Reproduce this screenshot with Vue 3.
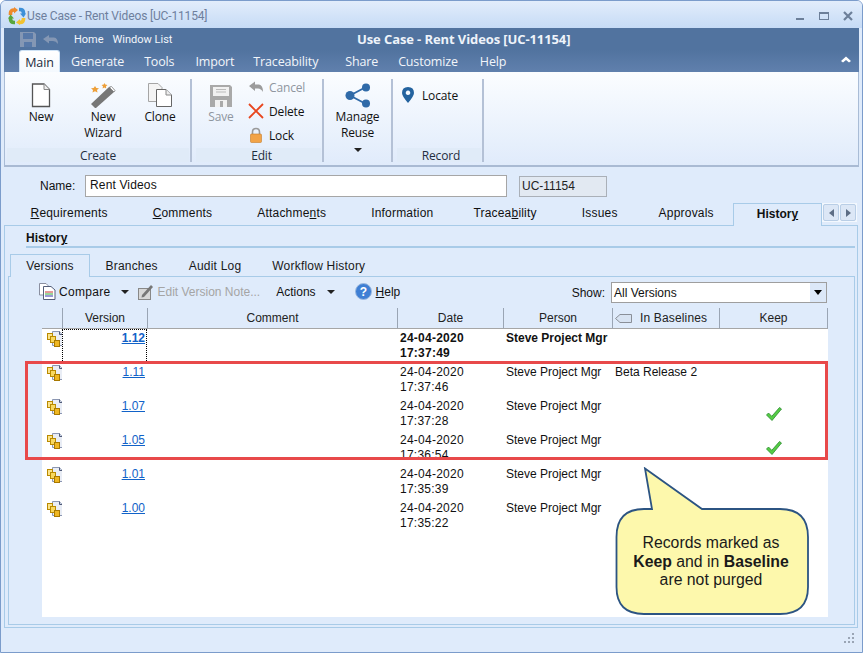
<script setup>
const tabs = [
  { pre: '', u: 'R', post: 'equirements' },
  { pre: '', u: 'C', post: 'omments' },
  { pre: 'Attachme', u: 'n', post: 'ts' },
  { pre: 'Information', u: '', post: '' },
  { pre: 'Tracea', u: 'b', post: 'ility' },
  { pre: 'Issues', u: '', post: '' },
  { pre: 'Approvals', u: '', post: '' },
]
const subTabs = ['Branches', 'Audit Log', 'Workflow History']
const columns = ['Version', 'Comment', 'Date', 'Person', 'In Baselines', 'Keep']
const rows = [
  { v: '1.12', t: '17:37:49', base: '', keep: false, bold: true },
  { v: '1.11', t: '17:37:46', base: 'Beta Release 2', keep: false },
  { v: '1.07', t: '17:37:28', base: '', keep: true },
  { v: '1.05', t: '17:36:54', base: '', keep: true },
  { v: '1.01', t: '17:35:39', base: '', keep: false },
  { v: '1.00', t: '17:35:22', base: '', keep: false },
]
</script>

<template>
  <div class="window">
    <header class="titlebar">
      <svg class="logo" width="18" height="18" viewBox="0 0 18 18" fill="none" stroke-width="3.6">
        <path d="M2.500 8 V6 Q2.500 3 6 3 H7" stroke="#ee8a2c" />
        <path d="M6 0 L10 3 L6 6.500 Z" fill="#ee8a2c" stroke="none" />
        <path d="M11 2.500 H12 Q15.500 2.500 15.500 6 V7" stroke="#3d90d8" />
        <path d="M12 6.500 L15.500 10.500 L18 6.500 Z" fill="#3d90d8" stroke="none" />
        <path d="M15.500 11 V12 Q15.500 15.500 12 15.500 H11" stroke="#f2c230" />
        <path d="M12 12 L8 15.500 L12 18 Z" fill="#f2c230" stroke="none" />
        <path d="M7 15.500 H6 Q2.500 15.500 2.500 12 V11" stroke="#5aa63c" />
        <path d="M0 11.500 L2.500 7.500 L6 11.500 Z" fill="#5aa63c" stroke="none" />
      </svg>
      <span class="win-title">Use Case - Rent Videos [UC-11154]</span>
      <div class="win-btns">
        <svg width="12" height="12" viewBox="0 0 12 12"><rect x="2" y="8" width="8" height="2" fill="#6c7f99" /></svg>
        <svg width="12" height="12" viewBox="0 0 12 12"><rect x="1.500" y="2.500" width="9" height="7" fill="none" stroke="#6c7f99" /><rect x="1" y="2" width="10" height="2" fill="#6c7f99" /></svg>
        <svg width="12" height="12" viewBox="0 0 12 12"><path d="M2 2 L10 10 M10 2 L2 10" stroke="#6c7f99" stroke-width="2.200" /></svg>
      </div>
    </header>

    <section class="ribbon-head">
      <div class="qat">
        <svg class="qat-save" width="16" height="16" viewBox="0 0 16 16">
          <path d="M0 1 H14 L16 3 V16 H0 Z" fill="#8497b4" />
          <rect x="3" y="2" width="10" height="6" fill="#5879a8" />
          <rect x="4" y="11" width="8" height="5" fill="#5879a8" />
        </svg>
        <svg class="qat-undo" width="15" height="10" viewBox="0 0 15 10">
          <path d="M0 4 L6 0 V2.500 H11 Q15 3 15 9 Q13 6 10 6 H6 V8.500 Z" fill="#8497b4" />
        </svg>
        <span class="qat-link first">Home</span>
        <span class="qat-link">Window List</span>
        <span class="band-title">Use Case - Rent Videos [UC-11154]</span>
      </div>
      <nav class="rib-tabs">
        <span class="rib-tab active">Main</span>
        <span class="rib-tab t-gen">Generate</span>
        <span class="rib-tab t-too">Tools</span>
        <span class="rib-tab t-imp">Import</span>
        <span class="rib-tab t-tra">Traceability</span>
        <span class="rib-tab t-sha">Share</span>
        <span class="rib-tab t-cus">Customize</span>
        <span class="rib-tab t-hel">Help</span>
        <svg class="collapse" width="10" height="7" viewBox="0 0 10 7"><path d="M0 5 L5 0.500 L10 5 L8 6.500 L5 4 L2 6.500 Z" fill="#fff" /></svg>
      </nav>
    </section>

    <section class="ribbon">
      <div class="group g-create">
        <div class="group-body">
          <div class="big w-new">
            <svg width="20" height="25" viewBox="0 0 20 25"><path d="M1.500 1 H13 L18.500 6.500 V23.500 H1.500 Z" fill="#fff" stroke="#555" stroke-width="1.300" /><path d="M13 1 V6.500 H18.500" fill="#eee" stroke="#888" /></svg>
            <span>New</span>
          </div>
          <div class="big w-wiz">
            <svg width="26" height="25" viewBox="0 0 26 25">
              <path d="M1 21 L19 4 Q20 3 21.500 4 L24.500 7 Q25 8 24 9 L6 25 H5 Z" fill="#777" />
              <path d="M19.500 4.500 L24 9 L25 7.500 L21.500 3.500 Z" fill="#fff" stroke="#777" stroke-width=".7" />
              <path d="M5 3 L6.300 5 L9 5.200 L7 7 L7.500 9.500 L5 8.300 L2.500 9.500 L3 7 L1 5.200 L3.700 5 Z" fill="#eea03a" />
              <path d="M14.500 0 L15.300 1.500 L17.500 2 L16 3.300 L16.200 5.500 L14.500 4.500 L12.500 5.500 L13 3.300 L11.500 2 L13.700 1.500 Z" fill="#eea03a" />
            </svg>
            <span>New<br />Wizard</span>
          </div>
          <div class="big w-clo">
            <svg width="24" height="25" viewBox="0 0 24 25">
              <path d="M.5 .5 H10 L14 4.500 V18.500 H.5 Z" fill="#f4f4f4" stroke="#a5a5a5" />
              <path d="M8.500 6.500 H18 L23.500 12 V23.500 H8.500 Z" fill="#fff" stroke="#666" />
              <path d="M18 6.500 V12 H23.500" fill="#eee" stroke="#888" />
            </svg>
            <span>Clone</span>
          </div>
        </div>
        <div class="group-label">Create</div>
      </div>

      <div class="group g-edit">
        <div class="group-body">
          <div class="big w-save disabled">
            <svg width="22" height="22" viewBox="0 0 22 22">
              <path d="M0 0 H20 L22 2 V22 H0 Z" fill="#a9a9a9" />
              <rect x="3" y="2" width="16" height="9" fill="#f1f1f1" />
              <path d="M6 4.500 H16 M6 7 H16" stroke="#bbb" />
              <rect x="5" y="15" width="12" height="7" fill="#f1f1f1" />
              <rect x="10" y="16" width="3" height="6" fill="#a9a9a9" />
            </svg>
            <span>Save</span>
          </div>
          <div class="small-col">
            <div class="small disabled">
              <svg width="16" height="16" viewBox="0 0 16 16"><path d="M1 7 L7 2.500 V5.500 H11 Q15 6 15 13 Q13 9.500 10 9.500 H7 V12 Z" fill="#9c9c9c" /></svg>
              <span>Cancel</span>
            </div>
            <div class="small">
              <svg width="16" height="16" viewBox="0 0 16 16"><path d="M1 1 L15 15 M15 1 L1 15" stroke="#e8461e" stroke-width="1.800" /></svg>
              <span>Delete</span>
            </div>
            <div class="small">
              <svg width="16" height="16" viewBox="0 0 16 16">
                <path d="M4.500 8 V5 Q4.500 1.500 8 1.500 Q11.500 1.500 11.500 5 V8" fill="none" stroke="#9a9a9a" stroke-width="1.600" />
                <rect x="2.500" y="7" width="11" height="8.500" rx="1" fill="#f2a347" stroke="#c77c28" stroke-width=".6" />
              </svg>
              <span>Lock</span>
            </div>
          </div>
        </div>
        <div class="group-label">Edit</div>
      </div>

      <div class="group g-reuse">
        <div class="big w-reuse">
          <svg width="26" height="25" viewBox="0 0 26 25">
            <path d="M21 4 L5 12.500 L21 21" fill="none" stroke="#2f6aa8" stroke-width="1.800" />
            <circle cx="21" cy="4.500" r="4" fill="#2f6aa8" />
            <circle cx="5" cy="12.500" r="4.500" fill="#2f6aa8" />
            <circle cx="21" cy="20.500" r="4" fill="#2f6aa8" />
          </svg>
          <span>Manage<br />Reuse</span>
          <i class="drop-arrow"></i>
        </div>
      </div>

      <div class="group g-record">
        <div class="group-body">
          <div class="small locate">
            <svg width="12" height="16" viewBox="0 0 12 16"><path fill-rule="evenodd" d="M6 0 Q12 0 12 6 Q12 9 6 16 Q0 9 0 6 Q0 0 6 0 Z M6 3.500 A2.300 2.300 0 1 0 6.010 3.500 Z" fill="#24639f" /></svg>
            <span>Locate</span>
          </div>
        </div>
        <div class="group-label">Record</div>
      </div>
    </section>

    <main class="body">
      <div class="name-row">
        <label class="name-label">Name:</label>
        <div class="name-input">Rent Videos</div>
        <div class="id-box">UC-11154</div>
      </div>

      <div class="tabs-row">
        <span v-for="t in tabs" :key="t.pre + t.u" class="tab">{{ t.pre }}<u v-if="t.u">{{ t.u }}</u>{{ t.post }}</span>
        <span class="tab tab-active">Histor<u>y</u></span>
        <div class="scroll-btns">
          <button class="scroll-btn" aria-label="Previous"><i class="tri-left"></i></button>
          <button class="scroll-btn" aria-label="Next"><i class="tri-right"></i></button>
        </div>
      </div>

      <div class="panel">
        <h2 class="history-title">Histor<u>y</u></h2>
        <div class="sub-tabs">
          <span class="sub-tab sub-active">Versions</span>
          <span v-for="s in subTabs" :key="s" class="sub-tab">{{ s }}</span>
        </div>
        <div class="subpanel">
          <div class="toolbar">
            <svg class="tb-icon" width="17" height="17" viewBox="0 0 17 17">
              <path d="M.5 .5 H7 L9 2.500 V12 H.5 Z" fill="#fff" stroke="#8a8fa0" />
              <path d="M4.500 3.500 H12 L16 7 V16.500 H4.500 Z" fill="#fff" stroke="#555f7a" />
              <path d="M6 9 H14" stroke="#c33" /><path d="M6 11 H14" stroke="#3a3" /><path d="M6 13 H14" stroke="#33a" />
            </svg>
            <span class="tb-text tb-compare">Compare</span>
            <i class="drop-arrow tb-drop"></i>
            <svg class="tb-edit" width="16" height="16" viewBox="0 0 16 16">
              <rect x=".5" y="4.500" width="12" height="11" fill="#d7d7d7" stroke="#888" />
              <path d="M4 11 L13 1 L15 3 L6 13 L3.500 13.500 Z" fill="#777" />
            </svg>
            <span class="tb-text disabled-text">Edit Version Note...</span>
            <span class="tb-text tb-actions">Actions</span>
            <i class="drop-arrow tb-drop"></i>
            <svg class="tb-help" width="17" height="17" viewBox="0 0 17 17">
              <circle cx="8.500" cy="8.500" r="8" fill="#3f7fd4" stroke="#9bb8de" />
              <text x="8.500" y="13" text-anchor="middle" font-size="12" font-weight="700" font-family="Liberation Sans, sans-serif" fill="#fff">?</text>
            </svg>
            <span class="tb-text"><u>H</u>elp</span>
            <div class="show">
              <span class="tb-text">Show:</span>
              <div class="combo">
                <span>All Versions</span>
                <span class="combo-btn"><i class="combo-arrow"></i></span>
              </div>
            </div>
          </div>

          <div class="grid">
            <div class="grid-head">
              <div class="hcell h-gutter"></div>
              <div v-for="c in columns" :key="c" class="hcell" :class="{ 'h-base': c === 'In Baselines' }">
                <svg v-if="c === 'In Baselines'" class="tag" width="17" height="9" viewBox="0 0 17 9"><path d="M.5 4.500 L5 .5 H16.500 V8.500 H5 Z" fill="#d8e3f2" stroke="#8a8f98" /></svg>
                {{ c }}
              </div>
            </div>
            <div class="grid-body">
              <div v-for="(r, i) in rows" :key="r.v" class="grow" :class="{ bold: r.bold }">
                <div class="cell c-icon">
                  <svg class="row-icon" width="16" height="16" viewBox="0 0 16 16">
                    <path d="M5.500 .5 H12.500 L15.500 3.500 V14.500 H5.500 Z" fill="#e9edf5" stroke="#8b96b2" />
                    <path d="M12.500 .5 V3.500 H15.500" fill="#cfd6e4" stroke="#4f5a78" />
                    <rect x=".5" y="2.500" width="5" height="6" fill="#fbe38a" stroke="#b98a00" />
                    <rect x="3.500" y="5.500" width="5" height="6" fill="#f8d860" stroke="#b98a00" />
                    <rect x="7.500" y="9.500" width="5" height="6" fill="#efb722" stroke="#a87800" />
                  </svg>
                </div>
                <div class="cell c-ver" :class="{ focused: i === 0 }"><a class="link">{{ r.v }}</a></div>
                <div class="cell"></div>
                <div class="cell c-date">24-04-2020<br />{{ r.t }}</div>
                <div class="cell c-person">Steve Project Mgr</div>
                <div class="cell c-base">{{ r.base }}</div>
                <div class="cell c-keep">
                  <svg v-if="r.keep" width="16" height="14" viewBox="0 0 16 14">
                    <path d="M.5 8 L2.500 6 L5.800 9.300 L13.500 .5 L15.500 2 L6 13.500 Z" fill="#55cc44" stroke="#2a8a30" stroke-width=".8" />
                  </svg>
                </div>
              </div>
            </div>
          </div>
        </div>
      </div>
      <div class="grip">
        <svg width="11" height="11" viewBox="0 0 11 11" fill="#9aa5b5">
          <rect x="8" y="0" width="2" height="2" /><rect x="4" y="4" width="2" height="2" /><rect x="8" y="4" width="2" height="2" />
          <rect x="0" y="8" width="2" height="2" /><rect x="4" y="8" width="2" height="2" /><rect x="8" y="8" width="2" height="2" />
        </svg>
      </div>
    </main>

    <div class="red-box"></div>
    <div class="callout">
      <svg class="callout-shape" width="196" height="150" viewBox="0 0 196 150">
        <path d="M30 1.500 L87 42 H165 Q193 42 193 70 V120 Q193 147 165 147 H29 Q1.500 147 1.500 120 V70 Q1.500 42 29 42 H37 Z" fill="#fdf8ac" stroke="#2c5482" stroke-width="1.800" />
      </svg>
      <p class="callout-text">Records marked as<br /><b>Keep</b> and in <b>Baseline</b><br />are not purged</p>
    </div>
  </div>
</template>

<style>
html, body { margin: 0; padding: 0; background: #fff; }
</style>

<style scoped>
* { box-sizing: border-box; }
.window {
  position: relative;
  width: 863px;
  height: 653px;
  display: flex;
  flex-direction: column;
  overflow: hidden;
  background: #dfebfb;
  border: 1px solid #7b9ccb;
  border-radius: 6px 6px 0 0;
  font-family: "Open Sans", "Noto Sans", sans-serif;
  font-size: 12px;
  color: #111;
}
.titlebar {
  height: 27px;
  flex: none;
  display: flex;
  align-items: center;
  padding: 3px 4px 0 7px;
  background: linear-gradient(#e2edfb, #c6dbf6);
}
.logo { flex: none; }
.win-title { margin-left: 1px; color: #6e7f9d; font-family: Roboto, sans-serif; font-size: 12px; letter-spacing: -.15px; }
.win-btns { margin-left: auto; display: flex; gap: 12px; padding-right: 4px; }

.ribbon-head {
  flex: none;
  height: 44px;
  margin: 0 3px;
  background: linear-gradient(#51739f 50%, #6080ad);
}
.qat { position: relative; height: 22px; display: flex; align-items: center; padding-left: 16px; }
.qat-undo { margin-left: 7px; margin-top: 1px; }
.qat-link { color: #f3f6fb; font-family: Roboto, sans-serif; font-size: 11px; margin-left: 9px; }
.qat-link.first { margin-left: 16px; }
.band-title {
  position: absolute; left: 353px; top: 2px;
  color: #eef3fa; font-weight: 700; font-size: 13px; letter-spacing: -.1px;
}
.rib-tabs { position: relative; height: 22px; display: flex; padding-left: 15px; color: #fff; }
.rib-tab { font-size: 12.500px; line-height: 24px; letter-spacing: -.15px; color: #f2f5fa; }
.rib-tab.active {
  width: 41px; text-align: center;
  color: #1b2a3c;
  background: linear-gradient(#fff, #f4f9fe);
  border: 1px solid #cfe3f6; border-bottom: none;
  border-radius: 3px 3px 0 0;
}
.t-gen { margin-left: 11px; }
.t-too { margin-left: 20px; }
.t-imp { margin-left: 21px; }
.t-tra { margin-left: 19px; }
.t-sha { margin-left: 27px; }
.t-cus { margin-left: 20px; }
.t-hel { margin-left: 22px; }
.collapse { position: absolute; right: 8px; top: 6px; }

.ribbon {
  flex: none;
  height: 95px;
  margin: 0 3px;
  display: flex;
  padding: 7px 0 0 2px;
  background: linear-gradient(#fbfdff, #e0ebfb);
  border: 1px solid #a9bcd6;
  border-top: none;
  border-bottom: 2px solid #a9bad3;
  letter-spacing: -.15px;
}
.group {
  height: 83px;
  display: flex;
  flex-direction: column;
  border-right: 2px solid #b4c1d6;
}
.g-create { width: 185px; }
.g-edit { width: 132px; }
.g-reuse { width: 69px; }
.g-record { width: 91px; }
.group-body { flex: 1; display: flex; min-height: 0; }
.group-label {
  height: 14px; flex: none; line-height: 16px; text-align: center;
  background: #e0ebf8; margin-right: 1px;
  color: #1f2d40;
}
.g-edit .group-label { margin-left: 4px; padding-left: 6px; }
.g-record .group-label { margin-left: 4px; padding-left: 4px; }
.big { display: flex; flex-direction: column; align-items: center; padding-top: 4px; line-height: 16px; text-align: center; }
.big svg { height: 25px; flex: none; margin-bottom: 1px; }
.w-new { width: 52px; margin-left: 8px; }
.w-wiz { width: 72px; }
.w-clo { width: 42px; }
.w-save { width: 40px; margin-left: 9px; }
.w-save svg { margin-top: 2px; height: 22px; margin-bottom: 2px; }
.w-reuse { width: 67px; position: relative; }
.disabled { color: #8f969f; }
.small-col { margin-top: -4px; margin-left: 7px; display: flex; flex-direction: column; }
.small { height: 24px; display: flex; align-items: center; gap: 5px; }
.locate { gap: 8px; margin: 4px 0 0 9px; }
.drop-arrow {
  display: block; width: 0; height: 0;
  border-left: 4px solid transparent; border-right: 4px solid transparent; border-top: 4px solid #222;
}
.w-reuse .drop-arrow { margin-top: 7px; }

.body { flex: 1; min-height: 0; display: flex; flex-direction: column; background: #dfebfb; font-family: "Liberation Sans", Arial, sans-serif; }
.name-row { height: 36px; display: flex; align-items: center; padding-top: 2px; flex: none; }
.name-label { margin-left: 39px; width: 45px; font-size: 12px; }
.name-input {
  width: 422px; height: 22px; line-height: 19px; padding-left: 4px; letter-spacing: .15px;
  background: #fff; border: 1px solid #a6a6a6;
}
.id-box {
  margin-left: 12px; width: 88px; height: 21px; line-height: 18px; padding-left: 2px;
  border: 1px solid #aab0b8; background: #e2e9f2; color: #222;
}
.tabs-row { position: relative; height: 22px; display: flex; align-items: stretch; padding-left: 7px; flex: none; letter-spacing: .2px; }
.tab { padding: 3px 22.500px 0; white-space: nowrap; line-height: 15px; }
.tab:nth-child(5) { margin-left: -5px; }
.tab:nth-child(7) { margin-left: -4px; }
.tab-active {
  margin-left: auto; position: absolute; left: 732px; top: 0; width: 89px; height: 23px;
  text-align: center; padding: 3px 0 0; letter-spacing: 0;
  font-weight: 700; background: #dfebfb;
  border: 1px solid #a8cbe8; border-bottom: none; z-index: 2;
}
.scroll-btns { position: absolute; left: 821px; top: 0; display: flex; gap: 1px; padding: 1px; background: #f3f8fe; z-index: 2; }
.scroll-btn {
  width: 16px; height: 17px; padding: 0; display: flex; align-items: center; justify-content: center;
  background: #dce7f6; border: 1px solid #b9cee6; border-radius: 2px;
}
.tri-left { border: 4px solid transparent; border-right: 5px solid #5d6d85; border-left: none; }
.tri-right { border: 4px solid transparent; border-left: 5px solid #5d6d85; border-right: none; }

.panel {
  flex: 1; min-height: 0; display: flex; flex-direction: column;
  margin: 0 4px 0 3px;
  border: 1px solid #a8cbe8;
  padding: 0 2px 2px 3px;
}
.history-title {
  margin: 5px 0 0 18px; height: 16px; font-size: 12px; line-height: 15px; font-weight: 700;
  border-bottom: 0; flex: none;
}
.history-title::after { content: ""; display: block; height: 2px; background: #a8cbe8; margin-top: 0; }
.sub-tabs { height: 22px; display: flex; margin-top: 7px; padding-left: 2px; flex: none; position: relative; letter-spacing: .2px; }
.sub-tab { padding: 4px 15.500px 0; line-height: 17px; color: #1a1a1a; }
.sub-active {
  width: 80px; height: 23px; padding: 3px 0 0; text-align: center; position: relative; z-index: 2;
  background: #dfebfb; border: 1px solid #a8cbe8; border-bottom: none;
}
.subpanel { flex: 1; min-height: 0; border: 1px solid #a8cbe8; padding: 0 26px 7px 33px; display: flex; flex-direction: column; }
.toolbar { height: 31px; display: flex; align-items: center; flex: none; padding-bottom: 2px; margin-left: -3px; }
.tb-text { white-space: nowrap; }
.tb-compare { letter-spacing: .3px; }
.tb-icon { margin-right: 3px; }
.tb-drop { margin-left: 11px; }
.tb-edit { margin-left: 9px; margin-right: 3px; }
.disabled-text { color: #a5a5a5; }
.tb-actions { margin-left: 16px; }
.tb-help { margin-left: 20px; margin-right: 4px; }
.show { margin-left: auto; display: flex; align-items: center; gap: 6px; margin-right: 1px; padding-top: 2px; }
.combo {
  width: 216px; height: 21px; display: flex; align-items: center; justify-content: space-between;
  padding-left: 2px; background: #fff; border: 1px solid #9e9e9e; color: #111;
}
.combo-btn { width: 16px; height: 19px; display: flex; align-items: center; justify-content: center; background: #dce8f8; }
.combo-arrow { border: 4.500px solid transparent; border-top: 5px solid #000; border-bottom: none; }

.grid { flex: 1; min-height: 0; display: flex; flex-direction: column; }
.grid-head, .grow { display: grid; grid-template-columns: 20px 85px 250px 106px 109px 107px 109px; }
.grid-head { height: 21px; flex: none; color: #222; }
.hcell {
  border-left: 1px solid #9aa5b4; border-bottom: 1px solid #a6a6a6;
  text-align: center; line-height: 20px; display: flex; align-items: center; justify-content: center;
}
.hcell:last-child { border-right: 1px solid #9aa5b4; }
.h-gutter { border-left: none; }
.h-base { justify-content: flex-start; letter-spacing: .15px; }
.tag { margin: 1px 8px 0 2px; flex: none; }
.grid-body { flex: 1; min-height: 0; background: #fff; }
.grow { height: 34px; line-height: 15px; }
.cell { padding-top: 2px; white-space: nowrap; overflow: hidden; }
.c-icon { padding: 2px 0 0 5px; }
.row-icon { display: block; }
.c-ver { text-align: right; padding-right: 2px; }
.c-ver.focused { border-left: 1px dotted #000; border-right: 1px dotted #000; border-top: 1px dotted #000; padding-top: 1px; padding-right: 1px; }
.link { color: #1162c8; text-decoration: underline; }
.bold { font-weight: 700; }
.c-date { padding-left: 3px; letter-spacing: .25px; }
.c-person { padding-left: 3px; }
.c-base { padding-left: 3px; }
.c-keep { text-align: center; padding-top: 10px; }

.grip { height: 24px; flex: none; display: flex; justify-content: flex-end; align-items: flex-end; padding: 0 7px 8px 0; }

.red-box {
  position: absolute; left: 24px; top: 360px; width: 803px; height: 99px;
  border: 3px solid #e8494a;
}
.callout { position: absolute; left: 614px; top: 466px; width: 196px; height: 150px; font-family: "Liberation Sans", Arial, sans-serif; }
.callout-shape { position: absolute; left: 0; top: 0; }
.callout-text {
  position: absolute; left: 0; right: 4px; top: 67px; margin: 0; text-align: center;
  font-size: 15.800px; line-height: 18.500px; color: #1a1a1a;
}
</style>
